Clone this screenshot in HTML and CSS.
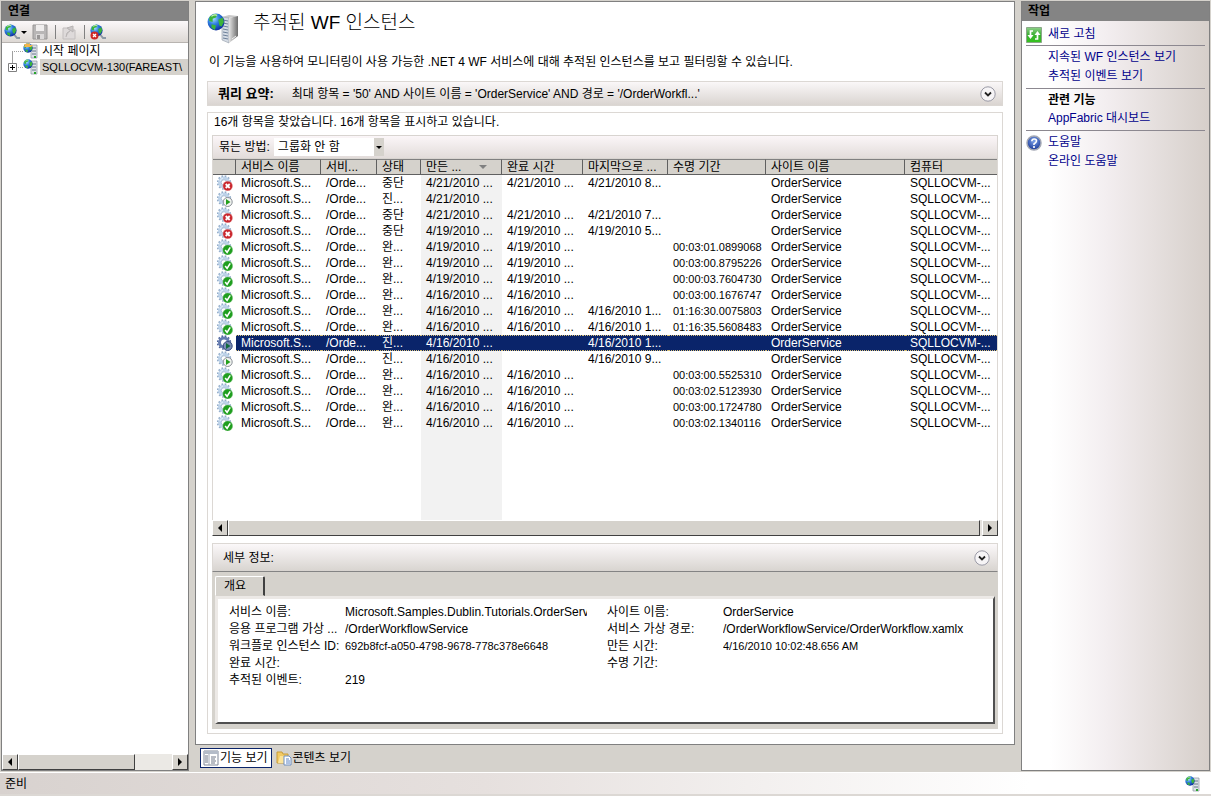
FILE: index.html
```html
<!DOCTYPE html>
<html lang="ko">
<head>
<meta charset="utf-8">
<title>추적된 WF 인스턴스</title>
<link rel="stylesheet" href="styles.css">
</head>
<body>
<svg class="defs" aria-hidden="true">
  <defs>
    <radialGradient id="sea" cx="35%" cy="30%" r="75%"><stop offset="0" stop-color="#a8e0ff"/><stop offset=".45" stop-color="#2f7fe0"/><stop offset="1" stop-color="#0a2a9c"/></radialGradient>
    <linearGradient id="side" x1="0" x2="1"><stop offset="0" stop-color="#e4e4e4"/><stop offset="1" stop-color="#6c6c6c"/></linearGradient>
    <linearGradient id="green" x1="0" y1="0" x2="0" y2="1"><stop offset="0" stop-color="#8fd08a"/><stop offset=".5" stop-color="#3aae30"/><stop offset="1" stop-color="#35c41e"/></linearGradient>
    <radialGradient id="blue" cx="50%" cy="35%" r="60%"><stop offset="0" stop-color="#7fa4ea"/><stop offset="1" stop-color="#1f3f9c"/></radialGradient>
    <symbol id="globe" viewBox="0 0 16 16"><circle cx="8" cy="8" r="7.5" fill="url(#sea)"/><path d="M2 4Q5 0 9 1L8 4 5 5 5 8 2 7zM10 6l4-2 1 4-2 4-2-1zM4 10l4 1-1 4-3-2z" fill="#3cb43a"/><path d="M4 3Q6 1 9 2" stroke="#d8f8c0" fill="none"/></symbol>
    <symbol id="server" viewBox="0 0 32 32"><path d="M15 5l7-2 9 1-9 2z" fill="#c8c8c8"/><path d="M15 5l7 1v25l-7-3z" fill="#d4dbe4" stroke="#929aa6" stroke-width=".6"/><path d="M22 6l9-2v20l-9 7z" fill="url(#side)"/><path d="M16 8l5 1M16 11l5 1M16 14l5 1M16 17l5 1M16 20l5 1M16 23l5 1M16 26l5 1" stroke="#6c7f98"/><path d="M25 27l4-3" stroke="#eee"/><use href="#globe" x="0" y="1" width="18" height="18"/></symbol>
    <symbol id="node" viewBox="0 0 16 16"><path d="M8 2h6v13H8z" fill="#dfe3e8" stroke="#8a94a0" stroke-width=".7"/><path d="M9 5h4M9 8h4M9 11h4" stroke="#68788c"/><path d="M11 13h2v2h-2z" fill="#27a52b"/><use href="#globe" x="0" y="0" width="10" height="10"/></symbol>
    <symbol id="start" viewBox="0 0 16 16"><use href="#node" width="16" height="16"/><path d="M4 0l1 1 2-1 0 2 3 0-2 2H2L0 4l2-1-1-2 2 0z" fill="#f3b54c"/></symbol>
    <symbol id="connect" viewBox="0 0 16 16"><path d="M9 9l4 5 3 0" fill="none" stroke="#8d99a5" stroke-width="2"/><use href="#globe" width="13" height="13"/></symbol>
    <symbol id="gear" viewBox="0 0 16 16"><circle cx="7" cy="7.500" r="4.500" fill="none" stroke="#bdd3ea" stroke-width="3"/><circle cx="7" cy="7.500" r="6.500" fill="none" stroke="#93adca" stroke-width="1.500" stroke-dasharray="1.700 1.700"/><circle cx="7" cy="7.500" r="2.800" fill="#fff" stroke="#8ba6c4" stroke-width=".7"/><path d="M3 6a4.500 4.500 0 0 1 3-3" stroke="#e8f2fb" fill="none"/></symbol>
    <symbol id="stop" viewBox="0 0 16 16"><use href="#gear" width="16" height="16"/><circle cx="10.700" cy="11" r="4.800" fill="#c9252c" stroke="#e7a0a0" stroke-width=".4"/><path d="M8.700 9l4 4M12.700 9l-4 4" stroke="#fff" stroke-width="1.800"/></symbol>
    <symbol id="run" viewBox="0 0 16 16"><use href="#gear" width="16" height="16"/><circle cx="10.700" cy="11" r="4.500" fill="#f4f4f4" stroke="#7c8288" stroke-width=".9"/><path d="M9 8l4.500 3L9 14z" fill="#23a01c"/></symbol>
    <symbol id="done" viewBox="0 0 16 16"><use href="#gear" width="16" height="16"/><circle cx="10.700" cy="11" r="4.900" fill="#1f9e1f" stroke="#7cc47c" stroke-width=".4"/><path d="M8.200 11l1.900 2.400 3.100-5" fill="none" stroke="#fff" stroke-width="1.600"/></symbol>
    <symbol id="runsel" viewBox="0 0 16 16"><circle cx="7" cy="7.500" r="4.500" fill="none" stroke="#647bb0" stroke-width="3"/><circle cx="7" cy="7.500" r="6.500" fill="none" stroke="#4a629c" stroke-width="1.500" stroke-dasharray="1.700 1.700"/><circle cx="10.700" cy="11" r="4.500" fill="#7c8cb4" stroke="#33497f"/><path d="M9 8l4.500 3L9 14z" fill="#116a3c"/></symbol>
    <symbol id="chev" viewBox="0 0 16 16"><circle cx="8" cy="8" r="7.200" fill="#f6f4f6" stroke="#9a9aa6"/><path d="M5 6.500l3 3 3-3" fill="none" stroke="#222" stroke-width="1.800"/></symbol>
    <symbol id="left" viewBox="0 0 8 8"><path d="M6 0v8L2 4z"/></symbol>
    <symbol id="right" viewBox="0 0 8 8"><path d="M2 0v8l4-4z"/></symbol>
    <symbol id="down" viewBox="0 0 8 8"><path d="M1 3h6L4 6z"/></symbol>
    <symbol id="sort" viewBox="0 0 8 8"><path d="M0 2h8L4 6z" fill="#808080"/></symbol>
  </defs>
</svg>

<div class="app">
  <aside class="pane connections">
    <h2 class="pane-title">연결</h2>
    <div class="toolbar">
      <button class="tool" aria-label="연결 만들기"><svg class="i16"><use href="#connect"/></svg><svg class="i8"><use href="#down"/></svg></button>
      <button class="tool" aria-label="저장" disabled><svg class="i16" viewBox="0 0 16 16"><path d="M1 1h14v14H1z" fill="#b8b6b6" stroke="#989696"/><path d="M4 1h8v6H4z" fill="#f0eeee"/><path d="M4 10h8v5H4z" fill="#dcdada"/><path d="M5 11h3v4H5z" fill="#989696"/></svg></button>
      <span class="sep"></span>
      <button class="tool" aria-label="위로" disabled><svg class="i16" viewBox="0 0 16 16"><path d="M2 4h5l1 2h6v9H2z" fill="#dedada" stroke="#c2bebe"/><path d="M5 13q0-5 4-6M6 4l6-2v6z" fill="#ccc8c8" stroke="#b8b4b4"/></svg></button>
      <span class="sep"></span>
      <button class="tool" aria-label="연결 끊기"><svg class="i16" viewBox="0 0 16 16"><use href="#connect" width="16" height="16"/><circle cx="4.500" cy="11.500" r="4" fill="#cf2626"/><path d="M3 10l3 3M6 10l-3 3" stroke="#fff" stroke-width="1.300"/></svg></button>
    </div>
    <ul class="tree">
      <li class="node"><span class="branch"></span><svg class="i16"><use href="#start"/></svg><span class="name">시작 페이지</span></li>
      <li class="node"><span class="branch last"><button class="plus" aria-label="펼치기"><svg viewBox="0 0 9 9"><path d="M.5.5h8v8h-8z" fill="#fff" stroke="#808080"/><path d="M2 4.500h5M4.500 2v5" stroke="#000"/></svg></button></span><svg class="i16"><use href="#node"/></svg><span class="name selected">SQLLOCVM-130(FAREAST\</span></li>
    </ul>
    <div class="hscroll">
      <button class="arrow" aria-label="왼쪽"><svg class="i8"><use href="#left"/></svg></button><span class="thumb short"></span><span class="track"></span><button class="arrow" aria-label="오른쪽"><svg class="i8"><use href="#right"/></svg></button>
    </div>
  </aside>

  <div class="center">
    <main class="pane page">
      <header class="heading"><svg class="i32"><use href="#server"/></svg><h1>추적된 WF 인스턴스</h1></header>
      <p class="intro">이 기능을 사용하여 모니터링이 사용 가능한 .NET 4 WF 서비스에 대해 추적된 인스턴스를 보고 필터링할 수 있습니다.</p>
      <section class="query"><strong>쿼리 요약:</strong><span class="grow">최대 항목 = '50' AND 사이트 이름 = 'OrderService' AND 경로 = '/OrderWorkfl...'</span><button class="tool" aria-label="쿼리 펼치기"><svg class="i16"><use href="#chev"/></svg></button></section>
      <section class="results">
        <p class="count">16개 항목을 찾았습니다. 16개 항목을 표시하고 있습니다.</p>
        <div class="groupbar"><label for="group">묶는 방법:</label><span class="combo"><select id="group"><option>그룹화 안 함</option></select><span class="combo-arrow"><svg class="i8"><use href="#down"/></svg></span></span></div>
        <div class="grid">
          <table>
            <colgroup><col class="c-icon"><col class="c-name"><col class="c-path"><col class="c-state"><col class="c-date"><col class="c-date"><col class="c-name"><col class="c-life"><col class="c-site"><col></colgroup>
            <thead><tr><th></th><th>서비스 이름</th><th>서비...</th><th>상태</th><th><span class="sorted">만든 ...<svg class="i8"><use href="#sort"/></svg></span></th><th>완료 시간</th><th>마지막으로 ...</th><th>수명 기간</th><th>사이트 이름</th><th>컴퓨터</th></tr></thead>
            <tbody>
              <tr><td><svg class="i16"><use href="#stop"/></svg></td><td>Microsoft.S...</td><td>/Orde...</td><td>중단</td><td>4/21/2010 ...</td><td>4/21/2010 ...</td><td>4/21/2010 8...</td><td></td><td>OrderService</td><td>SQLLOCVM-...</td></tr>
              <tr><td><svg class="i16"><use href="#run"/></svg></td><td>Microsoft.S...</td><td>/Orde...</td><td>진...</td><td>4/21/2010 ...</td><td></td><td></td><td></td><td>OrderService</td><td>SQLLOCVM-...</td></tr>
              <tr><td><svg class="i16"><use href="#stop"/></svg></td><td>Microsoft.S...</td><td>/Orde...</td><td>중단</td><td>4/21/2010 ...</td><td>4/21/2010 ...</td><td>4/21/2010 7...</td><td></td><td>OrderService</td><td>SQLLOCVM-...</td></tr>
              <tr><td><svg class="i16"><use href="#stop"/></svg></td><td>Microsoft.S...</td><td>/Orde...</td><td>중단</td><td>4/19/2010 ...</td><td>4/19/2010 ...</td><td>4/19/2010 5...</td><td></td><td>OrderService</td><td>SQLLOCVM-...</td></tr>
              <tr><td><svg class="i16"><use href="#done"/></svg></td><td>Microsoft.S...</td><td>/Orde...</td><td>완...</td><td>4/19/2010 ...</td><td>4/19/2010 ...</td><td></td><td>00:03:01.0899068</td><td>OrderService</td><td>SQLLOCVM-...</td></tr>
              <tr><td><svg class="i16"><use href="#done"/></svg></td><td>Microsoft.S...</td><td>/Orde...</td><td>완...</td><td>4/19/2010 ...</td><td>4/19/2010 ...</td><td></td><td>00:03:00.8795226</td><td>OrderService</td><td>SQLLOCVM-...</td></tr>
              <tr><td><svg class="i16"><use href="#done"/></svg></td><td>Microsoft.S...</td><td>/Orde...</td><td>완...</td><td>4/19/2010 ...</td><td>4/19/2010 ...</td><td></td><td>00:00:03.7604730</td><td>OrderService</td><td>SQLLOCVM-...</td></tr>
              <tr><td><svg class="i16"><use href="#done"/></svg></td><td>Microsoft.S...</td><td>/Orde...</td><td>완...</td><td>4/16/2010 ...</td><td>4/16/2010 ...</td><td></td><td>00:03:00.1676747</td><td>OrderService</td><td>SQLLOCVM-...</td></tr>
              <tr><td><svg class="i16"><use href="#done"/></svg></td><td>Microsoft.S...</td><td>/Orde...</td><td>완...</td><td>4/16/2010 ...</td><td>4/16/2010 ...</td><td>4/16/2010 1...</td><td>01:16:30.0075803</td><td>OrderService</td><td>SQLLOCVM-...</td></tr>
              <tr><td><svg class="i16"><use href="#done"/></svg></td><td>Microsoft.S...</td><td>/Orde...</td><td>완...</td><td>4/16/2010 ...</td><td>4/16/2010 ...</td><td>4/16/2010 1...</td><td>01:16:35.5608483</td><td>OrderService</td><td>SQLLOCVM-...</td></tr>
              <tr class="current"><td><svg class="i16"><use href="#runsel"/></svg></td><td>Microsoft.S...</td><td>/Orde...</td><td>진...</td><td>4/16/2010 ...</td><td></td><td>4/16/2010 1...</td><td></td><td>OrderService</td><td>SQLLOCVM-...</td></tr>
              <tr><td><svg class="i16"><use href="#run"/></svg></td><td>Microsoft.S...</td><td>/Orde...</td><td>진...</td><td>4/16/2010 ...</td><td></td><td>4/16/2010 9...</td><td></td><td>OrderService</td><td>SQLLOCVM-...</td></tr>
              <tr><td><svg class="i16"><use href="#done"/></svg></td><td>Microsoft.S...</td><td>/Orde...</td><td>완...</td><td>4/16/2010 ...</td><td>4/16/2010 ...</td><td></td><td>00:03:00.5525310</td><td>OrderService</td><td>SQLLOCVM-...</td></tr>
              <tr><td><svg class="i16"><use href="#done"/></svg></td><td>Microsoft.S...</td><td>/Orde...</td><td>완...</td><td>4/16/2010 ...</td><td>4/16/2010 ...</td><td></td><td>00:03:02.5123930</td><td>OrderService</td><td>SQLLOCVM-...</td></tr>
              <tr><td><svg class="i16"><use href="#done"/></svg></td><td>Microsoft.S...</td><td>/Orde...</td><td>완...</td><td>4/16/2010 ...</td><td>4/16/2010 ...</td><td></td><td>00:03:00.1724780</td><td>OrderService</td><td>SQLLOCVM-...</td></tr>
              <tr><td><svg class="i16"><use href="#done"/></svg></td><td>Microsoft.S...</td><td>/Orde...</td><td>완...</td><td>4/16/2010 ...</td><td>4/16/2010 ...</td><td></td><td>00:03:02.1340116</td><td>OrderService</td><td>SQLLOCVM-...</td></tr>
              <tr class="rest"><td></td><td></td><td></td><td></td><td></td><td></td><td></td><td></td><td></td><td></td></tr>
            </tbody>
          </table>
        </div>
        <div class="hscroll">
          <button class="arrow" aria-label="왼쪽"><svg class="i8"><use href="#left"/></svg></button><span class="thumb"></span><button class="arrow far" aria-label="오른쪽"><svg class="i8"><use href="#right"/></svg></button>
        </div>
        <div class="details">
          <div class="details-head"><span class="grow">세부 정보:</span><button class="tool" aria-label="세부 정보 접기"><svg class="i16"><use href="#chev"/></svg></button></div>
          <div class="tabs"><button class="tab">개요</button></div>
          <div class="tab-page">
            <dl><dt>서비스 이름:</dt><dd>Microsoft.Samples.Dublin.Tutorials.OrderServ</dd><dt>응용 프로그램 가상 ...</dt><dd>/OrderWorkflowService</dd><dt>워크플로 인스턴스 ID:</dt><dd class="digits">692b8fcf-a050-4798-9678-778c378e6648</dd><dt>완료 시간:</dt><dd></dd><dt>추적된 이벤트:</dt><dd>219</dd></dl>
            <dl><dt>사이트 이름:</dt><dd>OrderService</dd><dt>서비스 가상 경로:</dt><dd>/OrderWorkflowService/OrderWorkflow.xamlx</dd><dt>만든 시간:</dt><dd class="digits">4/16/2010 10:02:48.656 AM</dd><dt>수명 기간:</dt><dd></dd></dl>
          </div>
        </div>
      </section>
    </main>
    <div class="views">
      <button class="view on"><svg class="i16" viewBox="0 0 16 16"><path d="M1 1h14v14H1z" fill="#fff" stroke="#808898"/><path d="M1 1h14v3H1z" fill="#b4bcc8"/><path d="M2 6h3M2 8h3M2 10h3M2 12h3M8 7h5M8 9h4M8 11h5M8 13h4" stroke="#707888"/><path d="M6 4v11" stroke="#a0a8b4"/></svg>기능 보기</button>
      <button class="view"><svg class="i16" viewBox="0 0 16 16"><path d="M1 2h5l1 2h5v9H1z" fill="#f2ca64" stroke="#c89c38"/><path d="M2 13l2-7h9l-2 7z" fill="#fbe39a"/><path d="M8 6h5l2 2v7H8z" fill="#fff" stroke="#6f8fc0"/><path d="M10 9h3M10 11h4M10 13h4" stroke="#5c84c4"/></svg>콘텐츠 보기</button>
    </div>
  </div>

  <aside class="pane actions">
    <h2 class="pane-title">작업</h2>
    <nav>
      <div class="set"><a href="#" class="with-icon"><svg class="i16" viewBox="0 0 16 16"><path d="M.5.5h15v15H.5z" fill="url(#green)" stroke="#8aa888"/><path d="M7 4H4.500v5M11.500 7v5H9" stroke="#fff" stroke-width="1.700" fill="none"/><path d="M1.500 8h6l-3 4zM8.500 8h6l-3-4z" fill="#fff"/></svg>새로 고침</a></div>
      <div class="set"><a href="#">지속된 WF 인스턴스 보기</a><a href="#">추적된 이벤트 보기</a></div>
      <div class="set"><strong>관련 기능</strong><a href="#">AppFabric 대시보드</a></div>
      <div class="set"><a href="#" class="with-icon"><svg class="i16" viewBox="0 0 16 16"><circle cx="8" cy="8" r="7" fill="url(#blue)" stroke="#a4a8b4" stroke-width="1.500"/><path d="M5.800 6.200Q6 4 8.200 4q2.300 0 2.300 2Q10.500 7.200 8 9v1M8 11v2" fill="none" stroke="#fff" stroke-width="1.600"/></svg>도움말</a><a href="#">온라인 도움말</a></div>
    </nav>
  </aside>
</div>
<footer class="status"><span class="grow">준비</span><svg class="i16"><use href="#node"/></svg></footer>
</body>
</html>
```
FILE: styles.css
```css
* { box-sizing: border-box; margin: 0; padding: 0; }
body {
  display: flex; flex-direction: column; min-height: 100vh;
  background: #d5d2cc; color: #000;
  font: 12px/16px "Liberation Sans", "Noto Sans CJK KR", sans-serif;
}
button, select { font: inherit; color: inherit; background: none; border: 0; }
svg { display: block; flex: none; }
.defs { position: absolute; width: 0; height: 0; }
.i8 { width: 8px; height: 8px; }
.i16 { width: 16px; height: 16px; }
.i32 { width: 32px; height: 32px; }
.grow { flex: 1; }
.digits { font-size: 11px; }

.app { flex: 1; display: grid; grid-template-columns: 188px 1fr 189px; gap: 6px; padding: 1px; }
.pane { border: 1px solid #808080; background: #fff; min-width: 0; }
.pane-title { height: 19px; padding-left: 6px; background: #848484; font-size: 12px; line-height: 18px; }

.connections { display: flex; flex-direction: column; overflow: hidden; }
.toolbar { display: flex; align-items: center; gap: 4px; height: 22px; padding-left: 2px; background: linear-gradient(#fbf8f9, #ddd8d4); border-bottom: 1px solid #b8b4b0; }
.tool { display: flex; align-items: center; }
.sep { width: 1px; height: 14px; margin: 0 1px 0 3px; background: #808080; }
.tree { flex: 1; list-style: none; overflow: hidden; }
.node { display: flex; height: 16px; padding-left: 6px; }
.branch { width: 15px; display: flex; align-items: center; background: linear-gradient(#a0a0a0, #a0a0a0) 4px 8px / 1px 8px no-repeat, repeating-linear-gradient(90deg, #a0a0a0 0 1px, transparent 1px 2px) 4px 8px / 11px 1px no-repeat; }
.branch.last { background-position: 4px 0, 4px 8px; }
.plus { width: 9px; height: 9px; }
.name { flex: 1; margin-left: 1px; padding-left: 2px; white-space: nowrap; overflow: hidden; }
.selected { background: #d5d2cc; font-size: 11px; }

.hscroll { display: flex; height: 16px; background: #e6e3df; }
.arrow, .thumb { border: 1px solid; border-color: #fff #404040 #404040 #fff; background: #d5d2cc; }
.arrow { display: flex; align-items: center; justify-content: center; width: 16px; }
.arrow.far { margin-left: 2px; }
.thumb { flex: 1; }
.thumb.short { flex: 0 0 63%; }
.track { flex: 1; background: #ebe9e5; }

.center { display: flex; flex-direction: column; min-width: 0; }
.page { flex: 1; display: flex; flex-direction: column; padding: 10px 11px; }
.heading { display: flex; gap: 14px; height: 42px; }
h1 { font-size: 19px; line-height: 22px; font-weight: 300; }
.intro { padding-left: 2px; margin-bottom: 11px; }
.query { display: flex; align-items: center; gap: 18px; height: 25px; padding: 0 6px 0 10px; border: 1px solid #dcd8d4; background: linear-gradient(#faf7f8, #dad5d1); }
.query strong { font-size: 13px; }
.results { flex: 1; display: flex; flex-direction: column; margin-top: 6px; padding: 0 4px 4px; border: 1px solid #dcd8d4; }
.count { padding: 1px 2px 5px; }
.groupbar { display: flex; align-items: center; gap: 4px; height: 24px; padding-left: 6px; border: 1px solid #d8d4d0; background: linear-gradient(#fbf6f8, #e2dcda); }
.combo { position: relative; width: 110px; height: 18px; background: #fff; }
.combo select { width: 100%; height: 18px; padding-left: 4px; appearance: none; }
.combo-arrow { position: absolute; top: 0; right: 0; width: 10px; height: 18px; padding: 5px 1px; background: #d5d2cc; pointer-events: none; }

.grid { flex: 1; display: flex; flex-direction: column; border-left: 1px solid #dcd8d4; border-right: 1px solid #dcd8d4; }
table { flex: 1; width: 100%; table-layout: fixed; border-spacing: 0; }
.c-icon { width: 23px; } .c-name { width: 85px; } .c-path { width: 56px; } .c-state { width: 44px; }
.c-date { width: 81px; } .c-life { width: 98px; } .c-site { width: 139px; }
tr { height: 16px; }
th, td { height: 16px; padding-left: 5px; text-align: left; font-weight: 400; line-height: 16px; white-space: nowrap; overflow: hidden; }
th { background: #d5d2cc; border-right: 1px solid #606060; border-bottom: 1px solid #606060; border-top: 1px solid #808080; line-height: 14px; }
th:last-child { border-right: 0; }
.sorted { display: flex; align-items: center; justify-content: space-between; padding-right: 14px; }
td:first-child { padding-left: 4px; }
td:nth-child(5) { background: #f2f2f2; }
td:nth-child(8) { font-size: 11px; }
.current td, .current td:nth-child(5) { background: #0a246a; color: #fff; border-top: 1px dotted #d8c078; border-bottom: 1px dotted #d8c078; line-height: 14px; }
.current td:first-child { background: #fff; border: 0; }
.rest, .rest td { height: auto; }

.details { margin-top: 7px; padding-bottom: 5px; background: #d5d2cc; }
.details-head { display: flex; align-items: center; height: 29px; padding: 0 7px 0 10px; border: 1px solid #dcd8d4; border-bottom-color: #848484; background: linear-gradient(#fbf8f9, #d8d4d0); }
.tabs { padding: 4px 3px 0; }
.tab { display: block; width: 50px; height: 20px; padding-left: 8px; text-align: left; border: 1px solid; border-color: #fff #404040 transparent #fff; border-right-width: 2px; border-radius: 2px 2px 0 0; }
.tab-page { display: flex; gap: 20px; height: 128px; margin: 0 3px; padding: 5px 11px; background: #fff; border: 3px solid; border-color: #ece9e6 #505050 #505050 #ece9e6; border-right-width: 2px; border-bottom-width: 2px; }
dl { flex: 0 0 358px; display: grid; grid-template-columns: 116px 1fr; grid-auto-rows: 17px; line-height: 17px; white-space: nowrap; }
dd { overflow: hidden; }

.views { display: flex; gap: 2px; height: 26px; padding: 3px 5px; }
.view { display: flex; align-items: center; gap: 1px; height: 20px; padding: 0 3px 0 2px; }
.on { background: #fff; border: 1px solid #0a246a; }

.actions { background: linear-gradient(90deg, #fff 15%, #f3eef0 45%, #d6cfca); }
nav { padding: 2px 4px 0; }
.set { display: flex; flex-direction: column; padding: 2px 0 2px 22px; border-bottom: 1px solid #8c8890; }
.set:first-child { padding-bottom: 1px; }
.set:last-child { border: 0; }
.set a { color: #00008b; text-decoration: none; line-height: 19px; }
.set strong { line-height: 18px; }
.with-icon { display: flex; gap: 6px; align-items: center; margin-left: -22px; }

.status { display: flex; align-items: center; height: 24px; padding: 0 10px 0 5px; border-top: 1px solid #fff; border-bottom: 2px solid #dcd8d4; background: linear-gradient(90deg, #d8d2cf, #e6e0de 40%, #fff 85%); }
```
